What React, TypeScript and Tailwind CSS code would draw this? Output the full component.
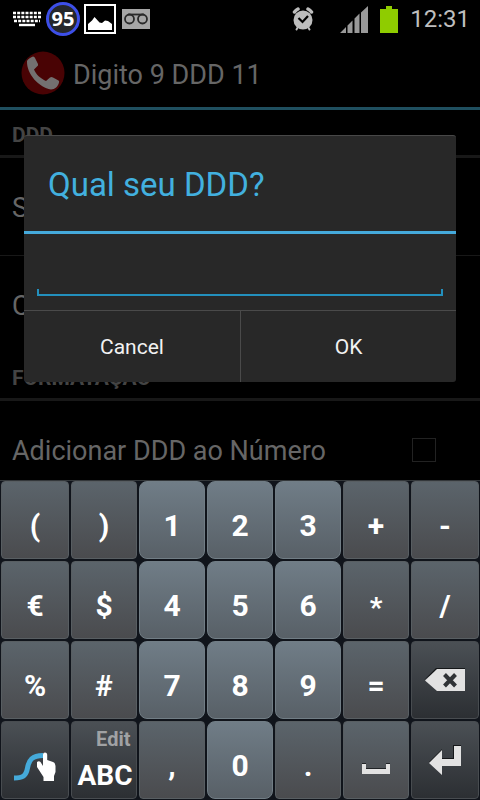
import React from "react";
import clsx from "clsx";

type KeyTone = "symbol" | "digit" | "action";

interface KeyItem {
  label: string;
  tone: KeyTone;
  content?: React.ReactNode;
}

const toneClasses: Record<KeyTone, string> = {
  symbol: "rounded-sm border-[#585e62] from-[#5b646b] to-[#4a4b4e]",
  digit: "rounded-lg border-[#717d85] from-[#707d87] to-[#586067]",
  action: "rounded-sm border-[#484c50] from-[#4b5055] to-[#2c2f33]",
};

function KeyboardIcon() {
  return (
    <svg width="30" height="16" viewBox="0 0 30 16" fill="none" stroke="#fff" aria-hidden="true">
      <path d="M1 2h28M1 6h28M2 10h26" strokeWidth="2.600" strokeDasharray="3 1.170" />
      <path d="M7 14h16" strokeWidth="2.400" />
    </svg>
  );
}

function PictureIcon() {
  return (
    <svg width="32" height="30" viewBox="0 0 32 30" aria-hidden="true">
      <path d="M1 1h30v28H1z" fill="#000" stroke="#fff" strokeWidth="2" />
      <path d="M4 26v-6l4-3.500 2.500-3.500 5 5.500 2.500.5 3-2.500 3 .5 4 3v6z" fill="#fff" />
    </svg>
  );
}

function VoicemailIcon() {
  return (
    <svg width="28" height="20" viewBox="0 0 28 20" aria-hidden="true">
      <path d="M0 0h28v20H0z" fill="#a6a6a6" />
      <g fill="none" stroke="#2a2a2a" strokeWidth="1.800">
        <circle cx="7.500" cy="10" r="4.500" />
        <circle cx="20.500" cy="10" r="4.500" />
        <path d="M6 5.500h16" />
      </g>
    </svg>
  );
}

function AlarmIcon() {
  return (
    <svg width="22" height="24" viewBox="0 0 22 24" aria-hidden="true">
      <g stroke="#bdbdbd" strokeWidth="3.500" fill="none" strokeLinecap="round">
        <path d="M2.500 5q1.500-2 3.500-3M19.500 5q-1.500-2-3.500-3" />
        <path d="M6 20l-1.500 2.500M16 20l1.500 2.500" strokeWidth="2" />
      </g>
      <circle cx="11" cy="13" r="9.500" fill="#bdbdbd" />
      <path d="M6.500 11l4 4 5.500-6" fill="none" stroke="#000" strokeWidth="2.200" />
    </svg>
  );
}

function SignalIcon() {
  return (
    <svg width="28" height="27" viewBox="0 0 28 27" fill="#999" aria-hidden="true">
      <path d="M0 27l6-6v6zM7.500 27v-7.500l5-5V27zM14.500 27V12.500l5-5V27zM21 27V6.500L28 0v27z" />
    </svg>
  );
}

function BatteryIcon() {
  return (
    <svg width="18" height="27" viewBox="0 0 18 27" fill="#8fcc00" aria-hidden="true">
      <path d="M6 0h6v3h6v24H0V3h6z" />
    </svg>
  );
}

function PhoneLogo() {
  return (
    <svg width="44" height="44" viewBox="0 0 44 44" aria-hidden="true">
      <circle cx="22" cy="22" r="21.500" fill="#490304" />
      <path
        d="M6 10c1-2 4-4 6-4.500q1.500 0 2 1.500l3 6q.5 1.500-1 2.500l-3 3c2 5 6.500 9 12 11.500l4-3.500q1.500-1 3 0l5.500 3q1 .5.500 2c-1 4-4 7-8 7C18 36.500 5.500 23 6 10z"
        fill="#737070"
      />
    </svg>
  );
}

function SwypeIcon() {
  return (
    <svg width="42" height="30" viewBox="0 0 42 30" aria-hidden="true">
      <path d="M0 26c9 0 12-2 13.500-10S18 3.500 29 3.500" fill="none" stroke="#45aada" strokeWidth="5" />
      <path
        d="M29 2.500q0-2 2-2t2.200 2V8l5.800 2q2.500 1 2.500 4v6L40 24v5H29.500v-4L23 15v-5q2-1.500 3.500 0l2.500 4z"
        fill="#fff"
      />
    </svg>
  );
}

function BackspaceIcon() {
  return (
    <svg width="42" height="24" viewBox="0 0 42 24" aria-hidden="true">
      <path d="M0 12L12 0h29v2H14z" fill="#151719" />
      <path d="M1 12.500L13 1h28v22H13z" fill="#e2e2e2" />
      <path d="M20.500 6.500l11 11.500M31.500 6.500l-11 11.500" stroke="#303336" strokeWidth="4" />
    </svg>
  );
}

function EnterIcon() {
  return (
    <svg width="32" height="30" viewBox="0 0 32 30" aria-hidden="true">
      <path d="M0 17L13 4v9h11V0h8v20H13z" fill="#151719" />
      <path d="M0 18L13 5v9h12V1h7v20H13v9z" fill="#e2e2e2" />
    </svg>
  );
}

function SpaceIcon() {
  return (
    <svg className="mt-4" width="28" height="11" viewBox="0 0 28 11" aria-hidden="true">
      <path d="M0 0h4v5h20V0h4v10H0z" fill="#202326" />
      <path d="M0 1h4v5h20V1h4v10H0z" fill="#e2e2e2" />
    </svg>
  );
}

const keys: KeyItem[] = [
  { label: "(", tone: "symbol" },
  { label: ")", tone: "symbol" },
  { label: "1", tone: "digit" },
  { label: "2", tone: "digit" },
  { label: "3", tone: "digit" },
  { label: "+", tone: "symbol" },
  { label: "-", tone: "symbol" },
  { label: "€", tone: "symbol" },
  { label: "$", tone: "symbol" },
  { label: "4", tone: "digit" },
  { label: "5", tone: "digit" },
  { label: "6", tone: "digit" },
  { label: "*", tone: "symbol", content: <span className="pt-4 text-[28px]">*</span> },
  { label: "/", tone: "symbol" },
  { label: "%", tone: "symbol" },
  { label: "#", tone: "symbol" },
  { label: "7", tone: "digit" },
  { label: "8", tone: "digit" },
  { label: "9", tone: "digit" },
  { label: "=", tone: "symbol" },
  { label: "Backspace", tone: "action", content: <BackspaceIcon /> },
  { label: "Swype", tone: "action", content: <SwypeIcon /> },
  {
    label: "Edit ABC",
    tone: "action",
    content: (
      <span className="flex flex-col pl-0.5 pt-2">
        <span className="pr-0.5 text-right text-xl leading-6 text-[#a0a2a4]">Edit</span>
        <span className="text-[28px] leading-[50px]">ABC</span>
      </span>
    ),
  },
  { label: ",", tone: "symbol" },
  { label: "0", tone: "digit" },
  { label: ".", tone: "symbol" },
  { label: "Space", tone: "symbol", content: <SpaceIcon /> },
  { label: "Enter", tone: "action", content: <EnterIcon /> },
];

function StatusBar() {
  return (
    <div className="flex h-[38px] items-center justify-between pl-3 pr-2.5">
      <div className="flex items-center gap-1">
        <KeyboardIcon />
        <span className="flex size-[34px] items-center justify-center rounded-full border-[3px] border-[#3d4fe8] bg-[#25272b] font-['Noto_Sans',sans-serif] text-xl font-bold text-white">
          95
        </span>
        <PictureIcon />
        <span className="ml-0.5">
          <VoicemailIcon />
        </span>
      </div>
      <div className="flex items-center">
        <AlarmIcon />
        <span className="ml-[26px]">
          <SignalIcon />
        </span>
        <span className="ml-3">
          <BatteryIcon />
        </span>
        <span className="ml-3 text-2xl text-[#bebebe]">12:31</span>
      </div>
    </div>
  );
}

function SectionHeader({ children }: { children: React.ReactNode }) {
  return (
    <h2 className="flex h-12 items-center border-b-[3px] border-[#181818] px-3 pt-1.5 text-[21px] font-bold text-[#444]">
      {children}
    </h2>
  );
}

function Settings() {
  return (
    <div className="flex flex-col text-[27px] text-[#666]">
      <header className="flex h-[72px] items-center gap-2 border-b-[3px] border-[#1f4f5f] pl-[21px]">
        <PhoneLogo />
        <h1 className="pt-1.5">Digito 9 DDD 11</h1>
      </header>
      <SectionHeader>DDD</SectionHeader>
      <div className="flex h-[98px] items-center border-b border-[#181818] px-3 pt-1">S</div>
      <div className="flex h-[97px] items-center px-3 pt-1">C</div>
      <SectionHeader>FORMATAÇÃO</SectionHeader>
      <div className="flex h-[79px] items-start justify-between pl-3 pr-11 pt-[30px]">
        <label htmlFor="add-ddd" className="leading-10">
          Adicionar DDD ao Número
        </label>
        <input
          id="add-ddd"
          type="checkbox"
          className="mt-[7px] size-6 appearance-none border border-[#222] bg-black"
        />
      </div>
    </div>
  );
}

function DddDialog() {
  return (
    <div
      role="dialog"
      aria-labelledby="ddd-title"
      className="absolute inset-x-6 top-[135px] overflow-hidden rounded-[3px] border-t border-[#484848] bg-[#282828]"
    >
      <h2
        id="ddd-title"
        className="flex h-[98px] items-center border-b-[3px] border-[#45aadc] px-6 pt-0.5 text-[33px] text-[#42b0df]"
      >
        Qual seu DDD?
      </h2>
      <div className="px-[13px] pb-3.5 pt-2">
        <div className="relative">
          <input
            aria-labelledby="ddd-title"
            type="text"
            inputMode="numeric"
            className="block h-[54px] w-full border-b-2 border-[#2390bd] bg-transparent px-3 text-[27px] text-white outline-none"
          />
          <span className="absolute bottom-0 left-0 h-[7px] w-0.5 bg-[#2390bd]" />
          <span className="absolute bottom-0 right-0 h-[7px] w-0.5 bg-[#2390bd]" />
        </div>
      </div>
      <div className="grid grid-cols-2 border-t border-[#4a4a4a] text-[21px] text-[#f2f2f2]">
        <button type="button" className="h-[71px] pt-0.5">
          Cancel
        </button>
        <button type="button" className="h-[71px] border-l border-[#4a4a4a] pt-0.5">
          OK
        </button>
      </div>
    </div>
  );
}

function Keyboard() {
  return (
    <div className="grid grid-cols-[34fr_33fr_33fr_33fr_33fr_33fr_34fr] gap-0.5 border-t border-[#33373a] bg-[#10141b] px-px pb-px">
      {keys.map((key) => (
        <button
          key={key.label}
          type="button"
          aria-label={key.label}
          className={clsx(
            "flex h-[78px] min-w-0 items-center justify-center border bg-linear-to-b text-3xl font-bold text-white",
            !key.content && "pt-3",
            key.label === "Swype" && "pt-3.5",
            toneClasses[key.tone]
          )}
        >
          {key.content ?? key.label}
        </button>
      ))}
    </div>
  );
}

export default function App() {
  return (
    <main className="relative min-h-screen bg-black font-[Roboto,sans-serif]">
      <StatusBar />
      <Settings />
      <DddDialog />
      <Keyboard />
    </main>
  );
}
